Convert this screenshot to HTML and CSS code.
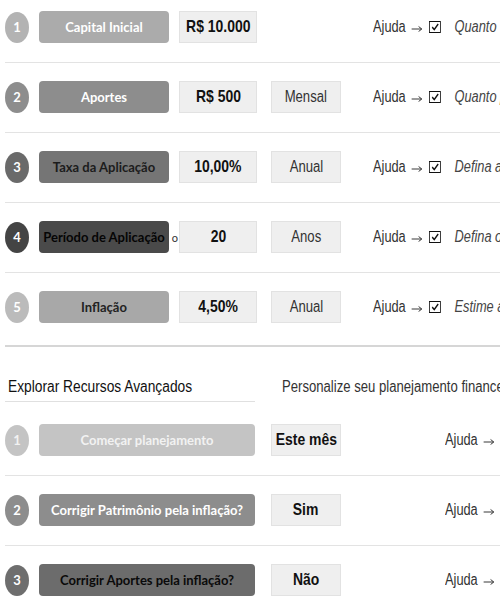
FILE: index.html
```html
<!DOCTYPE html>
<html lang="pt-BR">
<head>
    <meta charset="UTF-8">
    <meta name="viewport" content="width=device-width, initial-scale=1.0">
    <title>Planejamento Financeiro</title>
    <link rel="stylesheet" href="styles.css">
</head>
<body>
<div class="planner">
    <!-- Passos principais -->
    <div class="row first">
        <span class="step tone-1">1</span>
        <span class="label tone-1">Capital Inicial</span>
        <span class="value"><span class="txt">R$ 10.000</span></span>
        <span class="unit empty"></span>
        <span class="help">Ajuda<svg class="arrow" viewBox="0 0 14 8"><path d="M0 5 H12.5 M9 2.5 L13 5 L9 7.5" fill="none" stroke="#222" stroke-width="1"/></svg><svg class="check" viewBox="0 0 15 12" preserveAspectRatio="none"><rect x="0.6" y="0.5" width="13.8" height="11" fill="#fff" stroke="#111"/><path d="M4 6.2 L6.6 8.6 L11.5 3" fill="none" stroke="#111" stroke-width="1.7"/></svg><em>Quanto você tem hoje para investir?</em></span>
    </div>

    <div class="row">
        <span class="step tone-2">2</span>
        <span class="label tone-2">Aportes</span>
        <span class="value"><span class="txt">R$ 500</span></span>
        <span class="unit"><span class="txt">Mensal</span></span>
        <span class="help">Ajuda<svg class="arrow" viewBox="0 0 14 8"><path d="M0 5 H12.5 M9 2.5 L13 5 L9 7.5" fill="none" stroke="#222" stroke-width="1"/></svg><svg class="check" viewBox="0 0 15 12" preserveAspectRatio="none"><rect x="0.6" y="0.5" width="13.8" height="11" fill="#fff" stroke="#111"/><path d="M4 6.2 L6.6 8.6 L11.5 3" fill="none" stroke="#111" stroke-width="1.7"/></svg><em>Quanto pretende investir por mês?</em></span>
    </div>

    <div class="row">
        <span class="step tone-3">3</span>
        <span class="label tone-3">Taxa da Aplicação</span>
        <span class="value"><span class="txt">10,00%</span></span>
        <span class="unit"><span class="txt">Anual</span></span>
        <span class="help">Ajuda<svg class="arrow" viewBox="0 0 14 8"><path d="M0 5 H12.5 M9 2.5 L13 5 L9 7.5" fill="none" stroke="#222" stroke-width="1"/></svg><svg class="check" viewBox="0 0 15 12" preserveAspectRatio="none"><rect x="0.6" y="0.5" width="13.8" height="11" fill="#fff" stroke="#111"/><path d="M4 6.2 L6.6 8.6 L11.5 3" fill="none" stroke="#111" stroke-width="1.7"/></svg><em>Defina a rentabilidade esperada</em></span>
    </div>

    <div class="row">
        <span class="step tone-4">4</span>
        <span class="label tone-4">Período de Aplicação<span class="spill">o</span></span>
        <span class="value"><span class="txt">20</span></span>
        <span class="unit"><span class="txt">Anos</span></span>
        <span class="help">Ajuda<svg class="arrow" viewBox="0 0 14 8"><path d="M0 5 H12.5 M9 2.5 L13 5 L9 7.5" fill="none" stroke="#222" stroke-width="1"/></svg><svg class="check" viewBox="0 0 15 12" preserveAspectRatio="none"><rect x="0.6" y="0.5" width="13.8" height="11" fill="#fff" stroke="#111"/><path d="M4 6.2 L6.6 8.6 L11.5 3" fill="none" stroke="#111" stroke-width="1.7"/></svg><em>Defina o prazo do investimento</em></span>
    </div>

    <div class="row last">
        <span class="step tone-5">5</span>
        <span class="label tone-5">Inflação</span>
        <span class="value"><span class="txt">4,50%</span></span>
        <span class="unit"><span class="txt">Anual</span></span>
        <span class="help">Ajuda<svg class="arrow" viewBox="0 0 14 8"><path d="M0 5 H12.5 M9 2.5 L13 5 L9 7.5" fill="none" stroke="#222" stroke-width="1"/></svg><svg class="check" viewBox="0 0 15 12" preserveAspectRatio="none"><rect x="0.6" y="0.5" width="13.8" height="11" fill="#fff" stroke="#111"/><path d="M4 6.2 L6.6 8.6 L11.5 3" fill="none" stroke="#111" stroke-width="1.7"/></svg><em>Estime a inflação média</em></span>
    </div>

    <!-- Recursos avançados -->
    <div class="section-head">
        <h2><span class="txt">Explorar Recursos Avançados</span></h2>
        <p><span class="txt">Personalize seu planejamento financeiro</span></p>
    </div>

    <div class="row adv first-adv">
        <span class="step tone-a1">1</span>
        <span class="label tone-a1">Começar planejamento</span>
        <span class="value"><span class="txt">Este mês</span></span>
        <span class="help">Ajuda<svg class="arrow" viewBox="0 0 14 8"><path d="M0 5 H12.5 M9 2.5 L13 5 L9 7.5" fill="none" stroke="#222" stroke-width="1"/></svg></span>
    </div>

    <div class="row adv">
        <span class="step tone-2">2</span>
        <span class="label tone-2">Corrigir Patrimônio pela inflação?</span>
        <span class="value"><span class="txt">Sim</span></span>
        <span class="help">Ajuda<svg class="arrow" viewBox="0 0 14 8"><path d="M0 5 H12.5 M9 2.5 L13 5 L9 7.5" fill="none" stroke="#222" stroke-width="1"/></svg></span>
    </div>

    <div class="row adv">
        <span class="step tone-a3">3</span>
        <span class="label tone-a3">Corrigir Aportes pela inflação?</span>
        <span class="value"><span class="txt">Não</span></span>
        <span class="help">Ajuda<svg class="arrow" viewBox="0 0 14 8"><path d="M0 5 H12.5 M9 2.5 L13 5 L9 7.5" fill="none" stroke="#222" stroke-width="1"/></svg></span>
    </div>
</div>
</body>
</html>
```

FILE: styles.css
```css
* {
    margin: 0;
    padding: 0;
    box-sizing: border-box;
}

body {
    font-family: 'Liberation Sans', Arial, sans-serif;
    background: #fff;
    color: #333;
    overflow: hidden;
}

.planner {
    width: 500px;
    padding-left: 5px;
    white-space: nowrap;
}

/* texto estreito, como Arial Narrow */
.txt {
    display: inline-block;
    transform: scaleX(0.82);
}

.row {
    display: flex;
    align-items: center;
    padding: 18px 0 19px;
    border-bottom: 1px solid #e3e3e3;
}

.row.first {
    padding-top: 11px;
}

.row.last {
    padding-bottom: 22px;
    border-bottom: 2px solid #d6d6d6;
}

.step {
    flex: none;
    width: 24px;
    height: 31px;
    border-radius: 50%;
    display: flex;
    align-items: center;
    justify-content: center;
    color: #fff;
    font-family: Lato, 'Open Sans', sans-serif;
    font-weight: 700;
    font-size: 13px;
}

.label {
    position: relative;
    flex: none;
    width: 130px;
    height: 32px;
    margin-left: 10px;
    border-radius: 4px;
    display: flex;
    align-items: center;
    justify-content: center;
    font-family: Lato, 'Open Sans', sans-serif;
    font-weight: 700;
    font-size: 13px;
    color: #fff;
}

.spill {
    position: absolute;
    right: -9px;
    top: 10px;
    font-weight: 400;
    font-size: 11px;
    color: #333;
}

.tone-1 { background: #ababab; }
.tone-2 { background: #8d8d8d; }
.tone-3 { background: #757575; color: #1c1c1c; }
.tone-4 { background: #4a4a4a; color: #050505; }
.tone-5 { background: #a8a8a8; color: #222; }
.tone-a1 { background: #c4c4c4; color: #f2f2f2; }
.tone-a3 { background: #6c6c6c; color: #0a0a0a; }

.step.tone-1 { background: #b3b3b3; }
.step.tone-3 { background: #6a6a6a; color: #fff; }
.step.tone-4 { background: #444; color: #fff; }
.step.tone-5 { background: #bbb; color: #fff; }
.step.tone-a3 { background: #6e6e6e; color: #fff; }

.value,
.unit {
    flex: none;
    height: 32px;
    display: flex;
    align-items: center;
    justify-content: center;
    background: #efefef;
    border: 1px solid #e2e2e2;
    color: #111;
}

.value {
    width: 78px;
    margin-left: 10px;
    font-weight: 700;
    font-size: 17px;
}

.unit {
    width: 70px;
    margin-left: 14px;
    font-size: 16px;
    color: #333;
}

.unit.empty {
    visibility: hidden;
}

/* bloco de ajuda estreitado a partir da esquerda */
.help {
    margin-left: 32px;
    display: flex;
    align-items: center;
    font-size: 16px;
    color: #333;
    transform: scaleX(0.8);
    transform-origin: left center;
}

.arrow {
    width: 14px;
    height: 8px;
    margin: 2px 8px 0 7px;
}

.check {
    width: 15px;
    height: 12px;
    margin-right: 17px;
}

.help em {
    color: #444;
}

.section-head {
    display: flex;
    align-items: flex-end;
    padding-top: 31px;
}

.section-head h2 {
    flex: none;
    width: 250px;
    font-size: 16px;
    font-weight: 400;
    color: #111;
    padding: 0 0 5px 0;
    border-bottom: 1px solid #e0e0e0;
}

.section-head h2 .txt,
.section-head p .txt {
    transform-origin: left center;
}

.section-head h2 .txt {
    transform: scaleX(0.86);
    margin-left: 3px;
}

.section-head p {
    margin-left: 27px;
    padding-bottom: 6px;
    font-size: 16px;
    color: #333;
}

.row.first-adv {
    padding-top: 22px;
}

.adv .label {
    width: 216px;
}

.adv .value {
    width: 70px;
    margin-left: 16px;
}

.adv .help {
    margin-left: 104px;
}
```
